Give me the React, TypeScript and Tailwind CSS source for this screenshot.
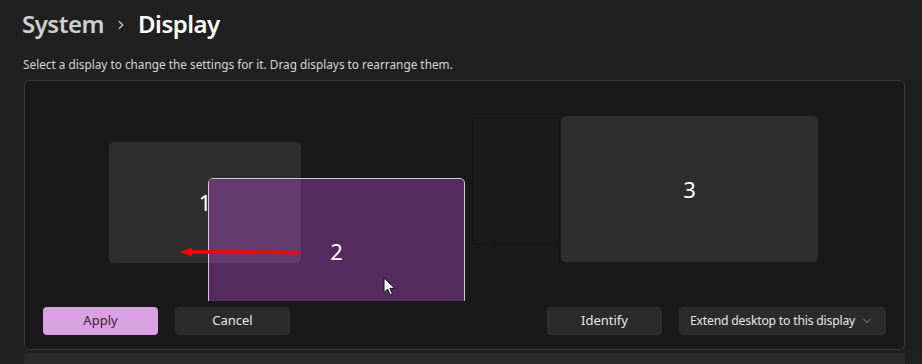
import React from 'react'
import { ChevronRight, ChevronDown } from 'lucide-react'

const font = { fontFamily: '"Noto Sans", "Open Sans", sans-serif' }

const Cursor: React.FC = () => (
    <svg width="14" height="20" viewBox="0 0 14 20" className="absolute left-[358px] top-[196px]">
        <path d="M1 1 L1 15.5 L4.6 12.2 L7.2 18 L9.4 17 L6.9 11.4 L11.8 11.4 Z" fill="#ffffff" stroke="#111111" strokeWidth="1" strokeLinejoin="round" />
    </svg>
)

const App: React.FC = () => {
    return (
        <div className="w-[922px] h-[364px] bg-[#202020] overflow-hidden text-[#e4e4e4]" style={font}>
            <div className="flex items-center pl-[22px] pt-[6px] h-[42px]">
                <span className="text-[24px] font-semibold text-[#cfcfcf] tracking-[-0.5px]">System</span>
                <ChevronRight size={14} strokeWidth={2} className="text-[#cfcfcf] mx-[10px] mt-[2px]" />
                <span className="text-[24px] font-semibold text-white tracking-[-0.5px]">Display</span>
            </div>
            <div className="pl-[23px] mt-[14px] text-[11.8px] text-[#d6d6d6] leading-[16px]">
                Select a display to change the settings for it. Drag displays to rearrange them.
            </div>

            <div className="flex">
                <div className="ml-[24px] mt-[8px] w-[881px] h-[270px] bg-[#191919] border border-[#3a3a3a] rounded-[5px] overflow-hidden">
                    <div className="relative h-[220px] overflow-hidden">
                        {/* drag ghost lines */}
                        <div className="absolute left-[447px] top-[36px] w-[88px] h-[128px] border border-[#151515]" />
                        <div className="absolute left-[469px] top-[44px] w-[66px] h-[140px] border-l border-r border-[#161616]" />
                        <div className="absolute left-[491px] top-[40px] w-[40px] h-[120px] border-l border-[#161616]" />

                        {/* display 1 */}
                        <div className="absolute left-[84px] top-[61px] w-[192px] h-[121px] bg-[#2e2e2e] rounded-[5px] flex items-center justify-center">
                            <span className="text-[22px] text-white">1</span>
                        </div>

                        {/* display 2 */}
                        <div className="absolute left-[183px] top-[97px] w-[257px] h-[146px] bg-[#552b5e] border-[1.5px] border-[#d6c6dc] rounded-[5px] overflow-hidden">
                            <div className="absolute left-0 top-0 w-[92px] h-[84px] bg-[#653a6d] rounded-br-[5px]" />
                            <div className="absolute inset-0 flex items-center justify-center">
                                <span className="text-[22px] text-white">2</span>
                            </div>
                        </div>

                        {/* display 3 */}
                        <div className="absolute left-[536px] top-[35px] w-[257px] h-[146px] bg-[#2e2e2e] rounded-[5px] flex items-center justify-center">
                            <span className="text-[22px] text-white">3</span>
                        </div>

                        {/* red arrow */}
                        <svg width="124" height="12" viewBox="0 0 124 12" className="absolute left-[153px] top-[165px]">
                            <line x1="12" y1="6" x2="122" y2="6.5" stroke="#ff0000" strokeWidth="3.5" />
                            <path d="M2 6 L14 1.5 L14 10.5 Z" fill="#ff0000" />
                        </svg>

                        <Cursor />
                    </div>

                    <div className="flex items-center px-[18px] pt-[6px] text-[13px]">
                        <button className="w-[115px] h-[28px] rounded-[4px] bg-[#d9a0e2] text-[#3b2240]">Apply</button>
                        <button className="ml-[17px] w-[115px] h-[28px] rounded-[4px] bg-[#2b2b2b] border border-[#303030] text-[#e6e6e6]">Cancel</button>
                        <div className="flex-1" />
                        <button className="w-[115px] h-[28px] rounded-[4px] bg-[#2b2b2b] border border-[#303030] text-[#e6e6e6]">Identify</button>
                        <button className="ml-[17px] w-[207px] h-[28px] rounded-[4px] bg-[#2b2b2b] border border-[#303030] text-[#e6e6e6] flex items-center pl-[10px] pr-[12px] whitespace-nowrap">
                            <span className="text-[12.2px] tracking-[-0.2px]">Extend desktop to this display</span>
                            <div className="flex-1" />
                            <ChevronDown size={12} strokeWidth={1.5} className="text-[#bdbdbd]" />
                        </button>
                    </div>
                </div>
                <div className="flex-1 mt-[8px] bg-[#1e1e1e]" />
            </div>

            <div className="ml-[24px] mt-[3px] w-[881px] h-[20px] bg-[#2b2b2b] rounded-t-[4px]" />
        </div>
    )
}

export default App
